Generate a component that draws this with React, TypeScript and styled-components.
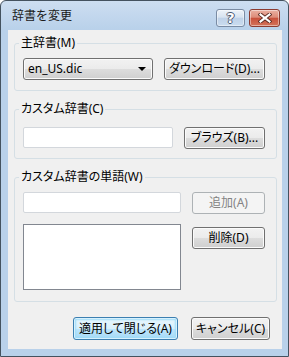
import React from 'react';
import styled, { createGlobalStyle, css } from 'styled-components';

const GlobalStyle = createGlobalStyle`
  html, body {
    margin: 0;
    padding: 0;
    background: #ffffff;
  }
  body {
    font-family: "Noto Sans", "Noto Sans CJK JP", sans-serif;
    font-size: 12px;
    font-feature-settings: "palt";
    color: #000;
  }
  * {
    box-sizing: border-box;
  }
`;

const Window = styled.div`
  width: 289px;
  height: 357px;
  border: 1px solid #44525f;
  border-radius: 6px 6px 0 0;
  background: linear-gradient(#cddef1, #b9d1ea 28px);
  display: flex;
  flex-direction: column;
  padding: 0 6px 7px 7px;
`;

const TitleBar = styled.div`
  height: 29px;
  display: flex;
  align-items: flex-start;
  padding: 0 2px 0 4px;
`;

const Title = styled.div`
  flex: 1;
  line-height: 14px;
  margin-top: 8px;
  color: #1a1a1a;
  font-feature-settings: normal;
`;

const Captions = styled.div`
  display: flex;
  gap: 4px;
  margin-top: 8px;
`;

const CaptionButton = styled.div<{ $close?: boolean }>`
  width: ${(p) => (p.$close ? 31 : 29)}px;
  height: 18px;
  border: 1px solid ${(p) => (p.$close ? '#8c3b30' : '#7a8ca4')};
  border-radius: 3px;
  display: flex;
  align-items: center;
  justify-content: center;
  box-shadow: inset 0 0 0 1px rgba(255, 255, 255, 0.45);
  background: ${(p) =>
    p.$close
      ? 'linear-gradient(#eab0a2 0%, #dd8c79 45%, #c8513c 52%, #d3735a 100%)'
      : 'linear-gradient(#eef3f9 0%, #d7e3f0 45%, #bfd2e8 52%, #cadcef 100%)'};
`;

const HelpMark = styled.span`
  font-family: "DejaVu Sans", sans-serif;
  font-weight: bold;
  font-size: 14px;
  line-height: 14px;
  color: #ffffff;
  text-shadow: 1px 0 0 #4c5870, -1px 0 0 #4c5870, 0 1px 0 #4c5870, 0 -1px 0 #4c5870;
`;

const Client = styled.div`
  flex: 1;
  background: #f0f0f0;
  padding: 6px 5px 0 6px;
  display: flex;
  flex-direction: column;
`;

const Group = styled.fieldset<{ $top: number; $bottom: number }>`
  margin: 0 0 11px;
  padding: ${(p) => p.$top}px 11px ${(p) => p.$bottom}px 8px;
  border: 1px solid #d5dfe5;
  border-radius: 3px;
  min-width: 0;
`;

const Legend = styled.legend`
  padding: 0 2px;
  margin-left: -4px;
  line-height: 14px;
  color: #000;
`;

const Row = styled.div`
  display: flex;
  justify-content: space-between;
  align-items: flex-start;
`;

const ListRow = styled(Row)`
  margin-top: 10px;
`;

const buttonFace = css`
  border: 1px solid #707070;
  border-radius: 3px;
  background: linear-gradient(#f2f2f2 0%, #ebebeb 50%, #dddddd 50%, #cfcfcf 100%);
  box-shadow: inset 0 0 0 1px #fbfbfb;
`;

const Button = styled.button<{ $w: number; $h?: number; $primary?: boolean; $offset?: number }>`
  ${buttonFace};
  width: ${(p) => p.$w}px;
  height: ${(p) => p.$h ?? 22}px;
  margin-top: ${(p) => p.$offset ?? 0}px;
  padding: 0;
  font: inherit;
  font-feature-settings: "palt";
  line-height: 14px;
  color: #000;
  ${(p) =>
    p.$primary &&
    css`
      border-color: #3c7fb1;
      background: linear-gradient(#eaf6fd 0%, #d9f0fc 50%, #bee6fd 50%, #a7d9f5 100%);
      box-shadow: inset 0 0 0 1px #d6f1fe, inset 0 0 2px 2px #9edcf8;
    `}
  &:disabled {
    border-color: #adb2b5;
    background: #f4f4f4;
    box-shadow: none;
    color: #838383;
  }
`;

const Combo = styled.div`
  ${buttonFace};
  width: 130px;
  height: 22px;
  display: flex;
  align-items: center;
  justify-content: space-between;
  padding: 0 6px 0 4px;
  line-height: 14px;
`;

const Arrow = styled.span`
  width: 0;
  height: 0;
  border-left: 4px solid transparent;
  border-right: 4px solid transparent;
  border-top: 4px solid #000;
`;

const TextBox = styled.div<{ $w: number }>`
  width: ${(p) => p.$w}px;
  height: 21px;
  background: #ffffff;
  border: 1px solid #d3d7dc;
  border-radius: 2px;
`;

const ListBox = styled.div`
  width: 158px;
  height: 66px;
  background: #ffffff;
  border: 1px solid #828790;
`;

const Footer = styled.div`
  margin-top: 4px;
  display: flex;
  justify-content: flex-end;
  gap: 13px;
  padding-right: 7px;
`;

const CloseIcon = () => (
  <svg width="14" height="10" viewBox="0 0 14 10">
    <path d="M2.5 1.5 L11.5 8.5 M11.5 1.5 L2.5 8.5" stroke="#5b2b23" strokeWidth="4" strokeLinecap="square" />
    <path d="M2.5 1.5 L11.5 8.5 M11.5 1.5 L2.5 8.5" stroke="#ffffff" strokeWidth="2.2" strokeLinecap="square" />
  </svg>
);

const App: React.FC = () => {
  return (
    <>
      <GlobalStyle />
      <Window>
        <TitleBar>
          <Title>辞書を変更</Title>
          <Captions>
            <CaptionButton>
              <HelpMark>?</HelpMark>
            </CaptionButton>
            <CaptionButton $close>
              <CloseIcon />
            </CaptionButton>
          </Captions>
        </TitleBar>
        <Client>
          <Group $top={8} $bottom={10}>
            <Legend>主辞書(M)</Legend>
            <Row>
              <Combo>
                <span>en_US.dic</span>
                <Arrow />
              </Combo>
              <Button $w={101}>ダウンロード(D)...</Button>
            </Row>
          </Group>
          <Group $top={11} $bottom={9}>
            <Legend>カスタム辞書(C)</Legend>
            <Row>
              <TextBox $w={150} />
              <Button $w={81}>ブラウズ(B)...</Button>
            </Row>
          </Group>
          <Group $top={8} $bottom={11}>
            <Legend>カスタム辞書の単語(W)</Legend>
            <Row>
              <TextBox $w={158} />
              <Button $w={73} disabled>
                追加(A)
              </Button>
            </Row>
            <ListRow>
              <ListBox />
              <Button $w={73} $offset={3}>
                削除(D)
              </Button>
            </ListRow>
          </Group>
          <Footer>
            <Button $w={105} $h={23} $primary>
              適用して閉じる(A)
            </Button>
            <Button $w={79} $h={23}>
              キャンセル(C)
            </Button>
          </Footer>
        </Client>
      </Window>
    </>
  );
};

export default App;
